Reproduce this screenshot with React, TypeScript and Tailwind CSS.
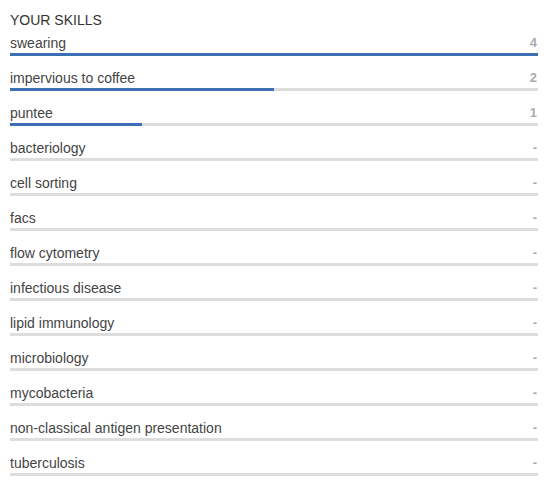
import React from 'react';

type Skill = { name: string; count: number };

const skills: Skill[] = [
  { name: 'swearing', count: 4 },
  { name: 'impervious to coffee', count: 2 },
  { name: 'puntee', count: 1 },
  { name: 'bacteriology', count: 0 },
  { name: 'cell sorting', count: 0 },
  { name: 'facs', count: 0 },
  { name: 'flow cytometry', count: 0 },
  { name: 'infectious disease', count: 0 },
  { name: 'lipid immunology', count: 0 },
  { name: 'microbiology', count: 0 },
  { name: 'mycobacteria', count: 0 },
  { name: 'non-classical antigen presentation', count: 0 },
  { name: 'tuberculosis', count: 0 },
];

const max = 4;

const App = () => {
  return (
    <div className="w-[556px] h-[485px] bg-white pl-[10px] pr-[18px] pt-[10px] font-['Liberation_Sans',Arial,sans-serif] text-[14px] text-[#444]">
      <h2 className="leading-[20px] text-[#333] mb-[3px]">YOUR SKILLS</h2>

      {skills.map((skill) => (
        <div key={skill.name} className="mb-[12px]">
          <div className="flex justify-between items-center h-[20px] leading-[20px]">
            <span>{skill.name}</span>
            <span className="text-[13px] font-bold text-[#aaa] pr-px">
              {skill.count > 0 ? skill.count : '-'}
            </span>
          </div>
          {/* progress line */}
          <div className="h-[3px] w-full bg-[#ddd]">
            <div
              className="h-full bg-[#3d6fb4]"
              style={{ width: `${(skill.count / max) * 100}%` }}
            ></div>
          </div>
        </div>
      ))}
    </div>
  );
};

export default App;
